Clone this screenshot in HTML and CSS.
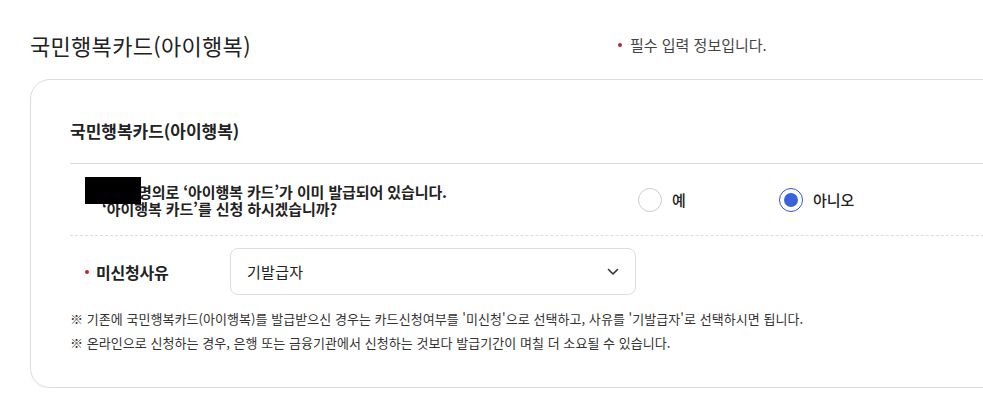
FILE: index.html
```html
<!DOCTYPE html>
<html lang="ko">
<head>
<meta charset="utf-8">
<title>국민행복카드(아이행복)</title>
<link rel="stylesheet" href="styles.css">
</head>
<body>
<div class="page">
  <div class="header">
    <h2 class="title">국민행복카드(아이행복)</h2>
    <p class="req"><span class="dot"></span>필수 입력 정보입니다.</p>
  </div>
  <section class="card">
    <h3 class="card-title">국민행복카드(아이행복)</h3>
    <div class="row question-row">
      <div class="question">
        <span class="redact"></span>
        <p class="question-text"><span class="name-gap"></span>명의로 ‘아이행복 카드’가 이미 발급되어 있습니다.<br>‘아이행복 카드’를 신청 하시겠습니까?</p>
      </div>
      <div class="radios">
        <label class="radio"><span class="circle"></span><span class="radio-label">예</span></label>
        <label class="radio checked"><span class="circle"></span><span class="radio-label">아니오</span></label>
      </div>
    </div>
    <div class="row select-row">
      <div class="field-label"><span class="dot"></span>미신청사유</div>
      <div class="select">
        <span class="select-value">기발급자</span>
        <svg class="chevron" width="12" height="8" viewBox="0 0 12 8"><path d="M1.5 1.5 L6 6 L10.5 1.5" fill="none" stroke="#333" stroke-width="1.6" stroke-linecap="round" stroke-linejoin="round"/></svg>
      </div>
    </div>
    <ul class="notes">
      <li>※ 기존에 국민행복카드(아이행복)를 발급받으신 경우는 카드신청여부를 '미신청'으로 선택하고, 사유를 '기발급자'로 선택하시면 됩니다.</li>
      <li>※ 온라인으로 신청하는 경우, 은행 또는 금융기관에서 신청하는 것보다 발급기간이 며칠 더 소요될 수 있습니다.</li>
    </ul>
  </section>
</div>
</body>
</html>
```

FILE: styles.css
```css
html, body {
  margin: 0;
  padding: 0;
  background: #fff;
  overflow: hidden;
}
body {
  font-family: "Noto Sans CJK KR", "Noto Sans", sans-serif;
  color: #333;
}
.page {
  width: 1150px;
  padding: 30px 0 0 30px;
}
.header {
  display: grid;
  grid-template-columns: 588px 1fr;
  align-items: center;
  height: 30px;
}
.title {
  margin: 0;
  font-size: 22px;
  line-height: 30px;
  font-weight: 400;
  letter-spacing: 0.3px;
  color: #222;
}
.req {
  margin: 0;
  font-size: 15px;
  line-height: 20px;
  color: #444;
  letter-spacing: 0;
  display: flex;
  align-items: center;
}
.dot {
  display: inline-block;
  width: 4px;
  height: 4px;
  border-radius: 50%;
  background: #c8232c;
  margin-right: 8px;
}
.card {
  margin-top: 19px;
  border: 1px solid #ddd;
  border-radius: 20px;
  padding: 39px 0 32px 39px;
  box-shadow: 0 2px 2px rgba(0, 0, 0, 0.03);
}
.card-title {
  margin: 0;
  font-size: 17px;
  line-height: 24px;
  font-weight: 700;
  letter-spacing: 0;
  color: #222;
  padding-bottom: 20px;
  border-bottom: 1px solid #ddd;
}
.row {
  display: flex;
  align-items: center;
}
.question-row {
  height: 71px;
  border-bottom: 1px dashed #ddd;
}
.question {
  position: relative;
  flex: 0 0 568px;
  box-sizing: border-box;
  padding-left: 32px;
}
.question-text {
  margin: 0;
  font-size: 15px;
  line-height: 17px;
  font-weight: 700;
  color: #222;
  letter-spacing: -0.1px;
}
.name-gap {
  display: inline-block;
  width: 36px;
}
.redact {
  position: absolute;
  left: 15px;
  top: -6px;
  width: 56px;
  height: 27px;
  background: #000;
}
.radios {
  display: flex;
  align-items: center;
}
.radio {
  display: flex;
  align-items: center;
  min-width: 141px;
  font-size: 15px;
  font-weight: 500;
  color: #222;
}
.circle {
  box-sizing: border-box;
  width: 24px;
  height: 24px;
  border-radius: 50%;
  border: 1px solid #ccc;
  margin-right: 10px;
  display: flex;
  align-items: center;
  justify-content: center;
}
.radio.checked .circle {
  border-color: #3457c9;
}
.radio.checked .circle::after {
  content: "";
  width: 14px;
  height: 14px;
  border-radius: 50%;
  background: #3b63d8;
}
.select-row {
  padding-top: 12px;
}
.field-label {
  flex: 0 0 160px;
  box-sizing: border-box;
  padding-left: 15px;
  display: flex;
  align-items: center;
  font-size: 16px;
  font-weight: 700;
  letter-spacing: -0.2px;
  color: #222;
}
.field-label .dot {
  margin-right: 7px;
}
.select {
  box-sizing: border-box;
  width: 406px;
  height: 47px;
  border: 1px solid #ddd;
  border-radius: 8px;
  padding: 0 16px;
  display: flex;
  align-items: center;
  justify-content: space-between;
  font-size: 15px;
  letter-spacing: 0.3px;
  color: #222;
}
.notes {
  list-style: none;
  margin: 12px 0 0;
  padding: 0;
  font-size: 13px;
  line-height: 24px;
  color: #333;
  letter-spacing: 0.05px;
}
```
